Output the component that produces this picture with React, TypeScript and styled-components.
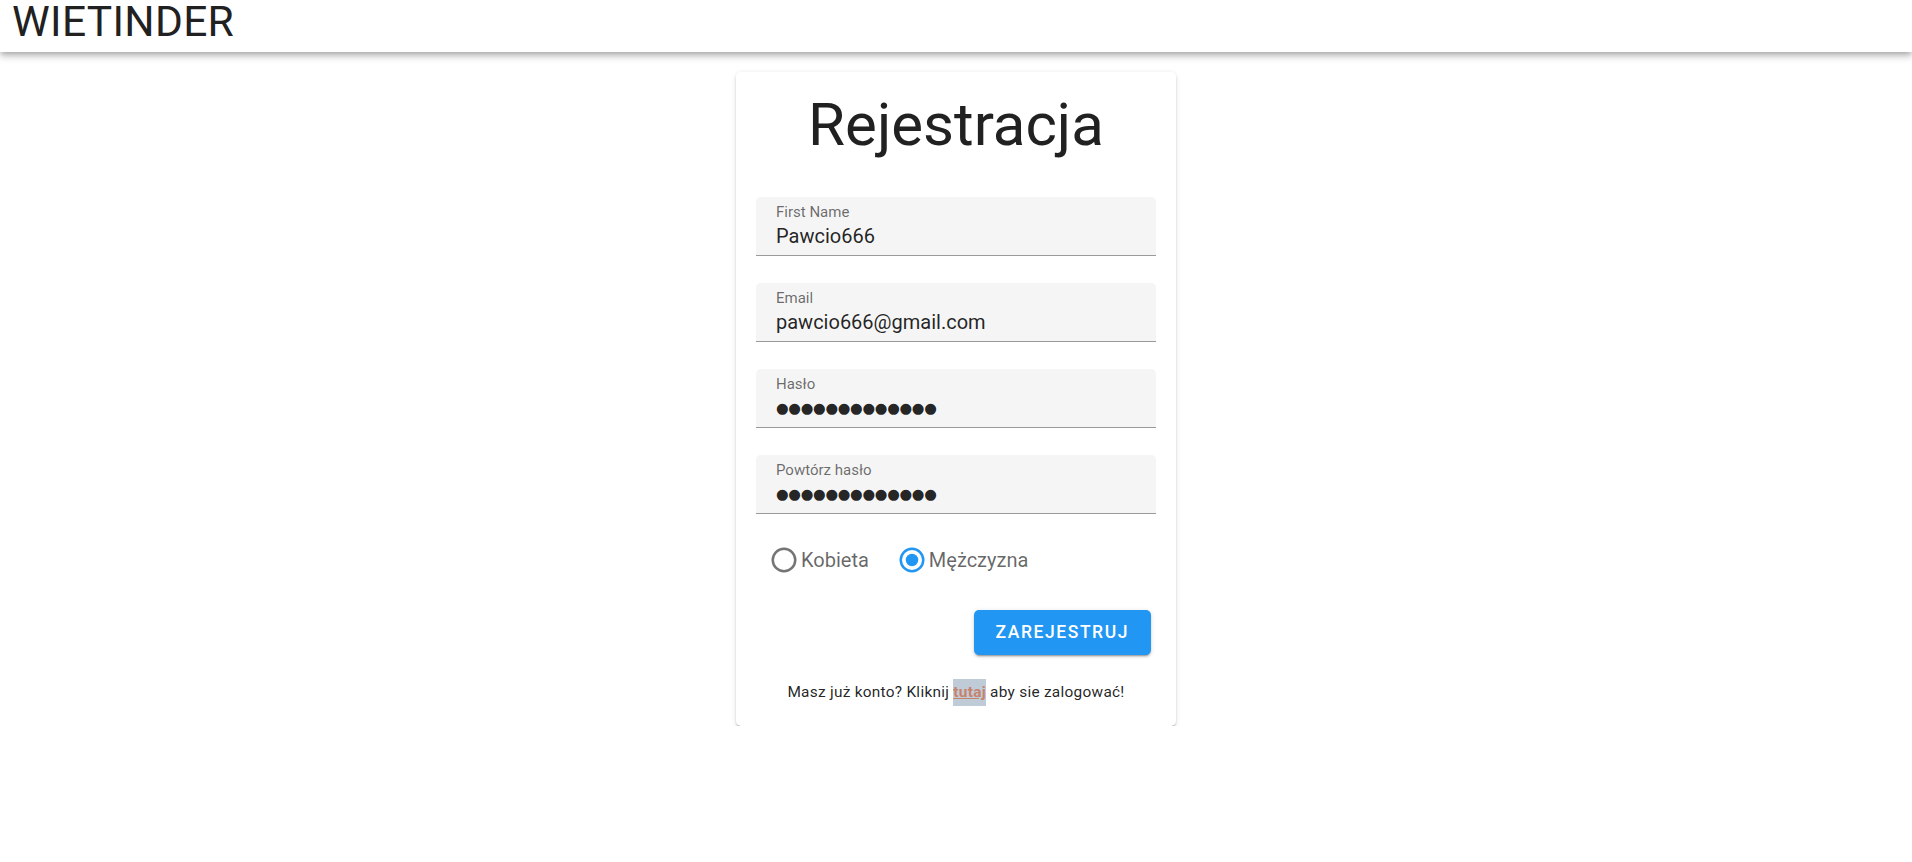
import React from "react";
import styled, { createGlobalStyle } from "styled-components";

const GlobalStyle = createGlobalStyle`
  html, body {
    margin: 0;
    padding: 0;
    background: #ffffff;
    font-family: Roboto, "Noto Sans", "Liberation Sans", sans-serif;
    color: rgba(0, 0, 0, 0.87);
  }
  * { box-sizing: border-box; }
`;

const Header = styled.header`
  height: 52px;
  padding: 0 12px;
  background: #ffffff;
  box-shadow: 0 2px 5px -1px rgba(0, 0, 0, 0.2), 0 5px 6px 0 rgba(0, 0, 0, 0.14),
    0 1px 12px 0 rgba(0, 0, 0, 0.12);
  display: flex;
  align-items: flex-start;
  position: relative;
  z-index: 2;
`;

const Brand = styled.div`
  font-size: 42.5px;
  line-height: 44px;
  font-weight: 400;
  letter-spacing: 0.0073em;
  color: #212121;
`;

const Main = styled.main`
  display: flex;
  justify-content: center;
  padding-top: 20px;
`;

const Card = styled.section`
  width: 440px;
  padding: 22px 20px 20px;
  background: #ffffff;
  border-radius: 5px;
  box-shadow: 0 3px 1px -2px rgba(0, 0, 0, 0.2), 0 2px 2px 0 rgba(0, 0, 0, 0.14),
    0 1px 5px 0 rgba(0, 0, 0, 0.12);
  display: flex;
  flex-direction: column;
`;

const Title = styled.h1`
  margin: 0 0 40px;
  font-size: 60px;
  line-height: 62.5px;
  font-weight: 400;
  text-align: center;
  color: #212121;
`;

const Fields = styled.div`
  display: flex;
  flex-direction: column;
  gap: 27px;
`;

const Field = styled.label`
  display: flex;
  flex-direction: column;
  height: 59px;
  padding: 6px 20px 0;
  background: #f5f5f5;
  border-radius: 5px 5px 0 0;
  border-bottom: 1px solid #9a9a9a;
`;

const FieldLabel = styled.span`
  font-size: 15px;
  line-height: 18px;
  color: rgba(0, 0, 0, 0.58);
  margin-bottom: 3px;
`;

const FieldInput = styled.input<{ $masked?: boolean }>`
  border: none;
  outline: none;
  background: transparent;
  padding: 0;
  margin: 0;
  height: 24px;
  width: 100%;
  font-family: ${(p) =>
    p.$masked ? '"DejaVu Sans", sans-serif' : 'Roboto, "Noto Sans", sans-serif'};
  font-size: ${(p) => (p.$masked ? "14.5px" : "20px")};
  letter-spacing: ${(p) => (p.$masked ? "-0.3px" : "normal")};
  line-height: 24px;
  color: rgba(0, 0, 0, 0.87);
`;

const RadioGroup = styled.div`
  display: flex;
  align-items: center;
  gap: 28px;
  height: 30px;
  margin: 31px 0 35px;
  padding-left: 13px;
`;

const RadioOption = styled.label`
  display: flex;
  align-items: center;
  gap: 2px;
  font-size: 20px;
  line-height: 30px;
  color: rgba(0, 0, 0, 0.6);
  cursor: pointer;
`;

const RadioIcon = styled.svg<{ $checked?: boolean }>`
  width: 30px;
  height: 30px;
  flex: none;
  fill: ${(p) => (p.$checked ? "#2196f3" : "rgba(0, 0, 0, 0.54)")};
`;

const Actions = styled.div`
  display: flex;
  justify-content: flex-end;
  padding-right: 5px;
  margin-bottom: 24px;
`;

const Button = styled.button`
  height: 45px;
  padding: 0 22px;
  border: none;
  border-radius: 5px;
  background: #2196f3;
  color: #ffffff;
  font-family: Roboto, "Noto Sans", sans-serif;
  font-size: 17.5px;
  font-weight: 500;
  letter-spacing: 0.0892em;
  text-transform: uppercase;
  box-shadow: 0 3px 1px -2px rgba(0, 0, 0, 0.2), 0 2px 2px 0 rgba(0, 0, 0, 0.14),
    0 1px 5px 0 rgba(0, 0, 0, 0.12);
  cursor: pointer;
`;

const Footer = styled.p`
  margin: 0;
  text-align: center;
  font-size: 15.4px;
  line-height: 27px;
  letter-spacing: 0.0178em;
  color: rgba(0, 0, 0, 0.87);
`;

const Link = styled.a`
  display: inline-block;
  background: #c0cbd8;
  color: #c7826c;
  font-weight: 700;
  text-decoration: underline;
`;

const blankPath =
  "M12,20A8,8 0 0,1 4,12A8,8 0 0,1 12,4A8,8 0 0,1 20,12A8,8 0 0,1 12,20M12,2A10,10 0 0,0 2,12A10,10 0 0,0 12,22A10,10 0 0,0 22,12A10,10 0 0,0 12,2Z";
const dotPath = "M12,7A5,5 0 0,0 7,12A5,5 0 0,0 12,17A5,5 0 0,0 17,12A5,5 0 0,0 12,7Z";

function Radio({ label, checked }: { label: string; checked?: boolean }) {
  return (
    <RadioOption>
      <RadioIcon viewBox="0 0 24 24" $checked={checked}>
        <path d={blankPath} />
        {checked && <path d={dotPath} />}
      </RadioIcon>
      {label}
    </RadioOption>
  );
}

const mask = "●".repeat(13);

const fields = [
  { label: "First Name", value: "Pawcio666", masked: false },
  { label: "Email", value: "pawcio666@gmail.com", masked: false },
  { label: "Hasło", value: mask, masked: true },
  { label: "Powtórz hasło", value: mask, masked: true },
];

export default function App() {
  return (
    <>
      <GlobalStyle />
      <Header>
        <Brand>WIETINDER</Brand>
      </Header>
      <Main>
        <Card>
          <Title>Rejestracja</Title>
          <Fields>
            {fields.map((f) => (
              <Field key={f.label}>
                <FieldLabel>{f.label}</FieldLabel>
                <FieldInput type="text" value={f.value} $masked={f.masked} readOnly />
              </Field>
            ))}
          </Fields>
          <RadioGroup>
            <Radio label="Kobieta" />
            <Radio label="Mężczyzna" checked />
          </RadioGroup>
          <Actions>
            <Button>Zarejestruj</Button>
          </Actions>
          <Footer>
            Masz już konto? Kliknij <Link href="#">tutaj</Link> aby sie zalogować!
          </Footer>
        </Card>
      </Main>
    </>
  );
}
